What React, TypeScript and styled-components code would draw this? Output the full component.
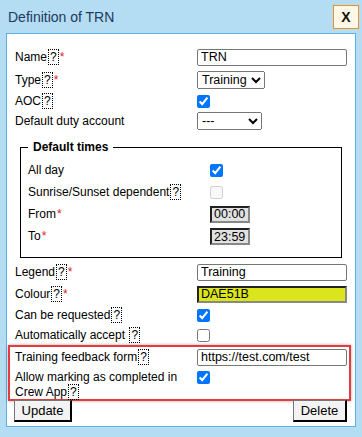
import React from 'react';
import styled, { createGlobalStyle } from 'styled-components';

const GlobalStyle = createGlobalStyle`
    html, body {
        margin: 0;
        padding: 0;
        background: #b4dcf3;
    }
    body {
        font-family: "Liberation Sans", Arial, sans-serif;
        font-size: 12px;
        color: #000;
    }
`;

const Window = styled.div`
    width: 362px;
    height: 437px;
    display: flex;
    flex-direction: column;
    box-sizing: border-box;
`;

const TitleBar = styled.div`
    height: 33px;
    display: flex;
    align-items: center;
    justify-content: space-between;
    padding: 0 3px 0 8px;
    box-sizing: border-box;
`;

const Title = styled.div`
    font-size: 14px;
    color: #1c3a5c;
`;

const CloseButton = styled.button`
    width: 26px;
    height: 24px;
    padding: 0;
    border: 1px solid #e8912b;
    background: #fff7e3;
    font-family: "Liberation Sans", Arial, sans-serif;
    font-weight: bold;
    font-size: 14px;
    color: #111;
`;

const Panel = styled.div`
    margin: 0 6px;
    background: #fff;
    border: 1px solid #5cb0e8;
    padding: 12px 8px 4px 8px;
    display: flex;
    flex-direction: column;
`;

const Row = styled.div<{ h: number }>`
    display: flex;
    align-items: center;
    height: ${p => p.h}px;
`;

const Label = styled.div`
    width: 182px;
    flex-shrink: 0;
    line-height: 15px;
`;

const Help = styled.span`
    border: 1px dotted #000;
    padding: 0 1px;
    margin-left: 1px;
`;

const Req = styled.span`
    color: #e0202a;
    margin-left: 1px;
`;

const TextInput = styled.input<{ w?: number }>`
    width: ${p => p.w ?? 150}px;
    height: 17px;
    box-sizing: border-box;
    border: 1px solid #767676;
    border-radius: 2px;
    padding: 0 3px;
    font-family: "Liberation Sans", Arial, sans-serif;
    font-size: 12.5px;
    color: #000;
    background: #fff;
    margin: 0;
`;

const InsetInput = styled(TextInput)<{ bg: string }>`
    background: ${p => p.bg};
    border-radius: 0;
    border-width: 2px;
    border-style: solid;
    border-color: #222 #888 #888 #222;
    padding: 0 2px;
`;

const Select = styled.select<{ w: number }>`
    width: ${p => p.w}px;
    height: 18px;
    font-family: "Liberation Sans", Arial, sans-serif;
    font-size: 12.5px;
    color: #000;
    margin: 0;
`;

const Check = styled.input.attrs({ type: 'checkbox' })`
    width: 13px;
    height: 13px;
    margin: 0;
`;

const Fieldset = styled.fieldset`
    margin: 8px 5px 3px 5px;
    padding: 5px 7px 9px 7px;
    border: 1px solid #000;
`;

const Legend = styled.legend`
    font-weight: bold;
    padding: 0 5px;
    line-height: 14px;
`;

const Highlight = styled.div`
    margin: 1px -4px 0 -7px;
    padding: 0 2px 0 5px;
    border: 2px solid #e8393d;
    box-shadow: 0 0 3px rgba(0, 0, 0, 0.35);
`;

const TwoLineRow = styled.div`
    display: flex;
    align-items: flex-start;
    padding-top: 3px;
    height: 29px;
`;

const CheckTop = styled(Check)`
    margin-top: 1px;
`;

const Buttons = styled.div`
    display: flex;
    justify-content: space-between;
    margin: -1px 0 0 -1px;
`;

const Button = styled.button<{ w: number }>`
    width: ${p => p.w}px;
    height: 22px;
    padding: 0;
    background: #f3f3f3;
    border-style: solid;
    border-width: 1px 2px 2px 1px;
    border-color: #777 #000 #000 #777;
    font-family: "Liberation Sans", Arial, sans-serif;
    font-size: 13px;
    color: #000;
`;

const LabelText = ({ text, help, req }: { text: string; help?: boolean; req?: boolean }) => (
    <Label>
        {text}
        {help && <Help>?</Help>}
        {req && <Req>*</Req>}
    </Label>
);

const App = () => {
    return (
        <Window>
            <GlobalStyle />
            <TitleBar>
                <Title>Definition of TRN</Title>
                <CloseButton>X</CloseButton>
            </TitleBar>
            <Panel>
                <Row h={22}>
                    <LabelText text="Name" help req />
                    <TextInput defaultValue="TRN" />
                </Row>
                <Row h={24}>
                    <LabelText text="Type" help req />
                    <Select w={68} defaultValue="Training">
                        <option>Training</option>
                    </Select>
                </Row>
                <Row h={18}>
                    <LabelText text="AOC" help />
                    <Check defaultChecked />
                </Row>
                <Row h={22}>
                    <LabelText text="Default duty account" />
                    <Select w={65} defaultValue="---">
                        <option>---</option>
                    </Select>
                </Row>
                <Fieldset>
                    <Legend>Default times</Legend>
                    <Row h={22}>
                        <LabelText text="All day" />
                        <Check defaultChecked />
                    </Row>
                    <Row h={22}>
                        <LabelText text="Sunrise/Sunset dependent" help />
                        <Check disabled />
                    </Row>
                    <Row h={22}>
                        <LabelText text="From" req />
                        <InsetInput w={40} bg="#e1e1e1" defaultValue="00:00" />
                    </Row>
                    <Row h={23}>
                        <LabelText text="To" req />
                        <InsetInput w={40} bg="#e1e1e1" defaultValue="23:59" />
                    </Row>
                </Fieldset>
                <Row h={22}>
                    <LabelText text="Legend" help req />
                    <TextInput defaultValue="Training" />
                </Row>
                <Row h={22}>
                    <LabelText text="Colour" help req />
                    <InsetInput bg="#dae51b" defaultValue="DAE51B" />
                </Row>
                <Row h={21}>
                    <LabelText text="Can be requested" help />
                    <Check defaultChecked />
                </Row>
                <Row h={18}>
                    <Label>
                        Automatically accept <Help>?</Help>
                    </Label>
                    <Check />
                </Row>
                <Highlight>
                    <Row h={20}>
                        <LabelText text="Training feedback form" help />
                        <TextInput defaultValue="https://test.com/test" />
                    </Row>
                    <TwoLineRow>
                        <Label>
                            Allow marking as completed in Crew App<Help>?</Help>
                        </Label>
                        <CheckTop defaultChecked />
                    </TwoLineRow>
                </Highlight>
                <Buttons>
                    <Button w={58}>Update</Button>
                    <Button w={54}>Delete</Button>
                </Buttons>
            </Panel>
        </Window>
    );
};

export default App;
